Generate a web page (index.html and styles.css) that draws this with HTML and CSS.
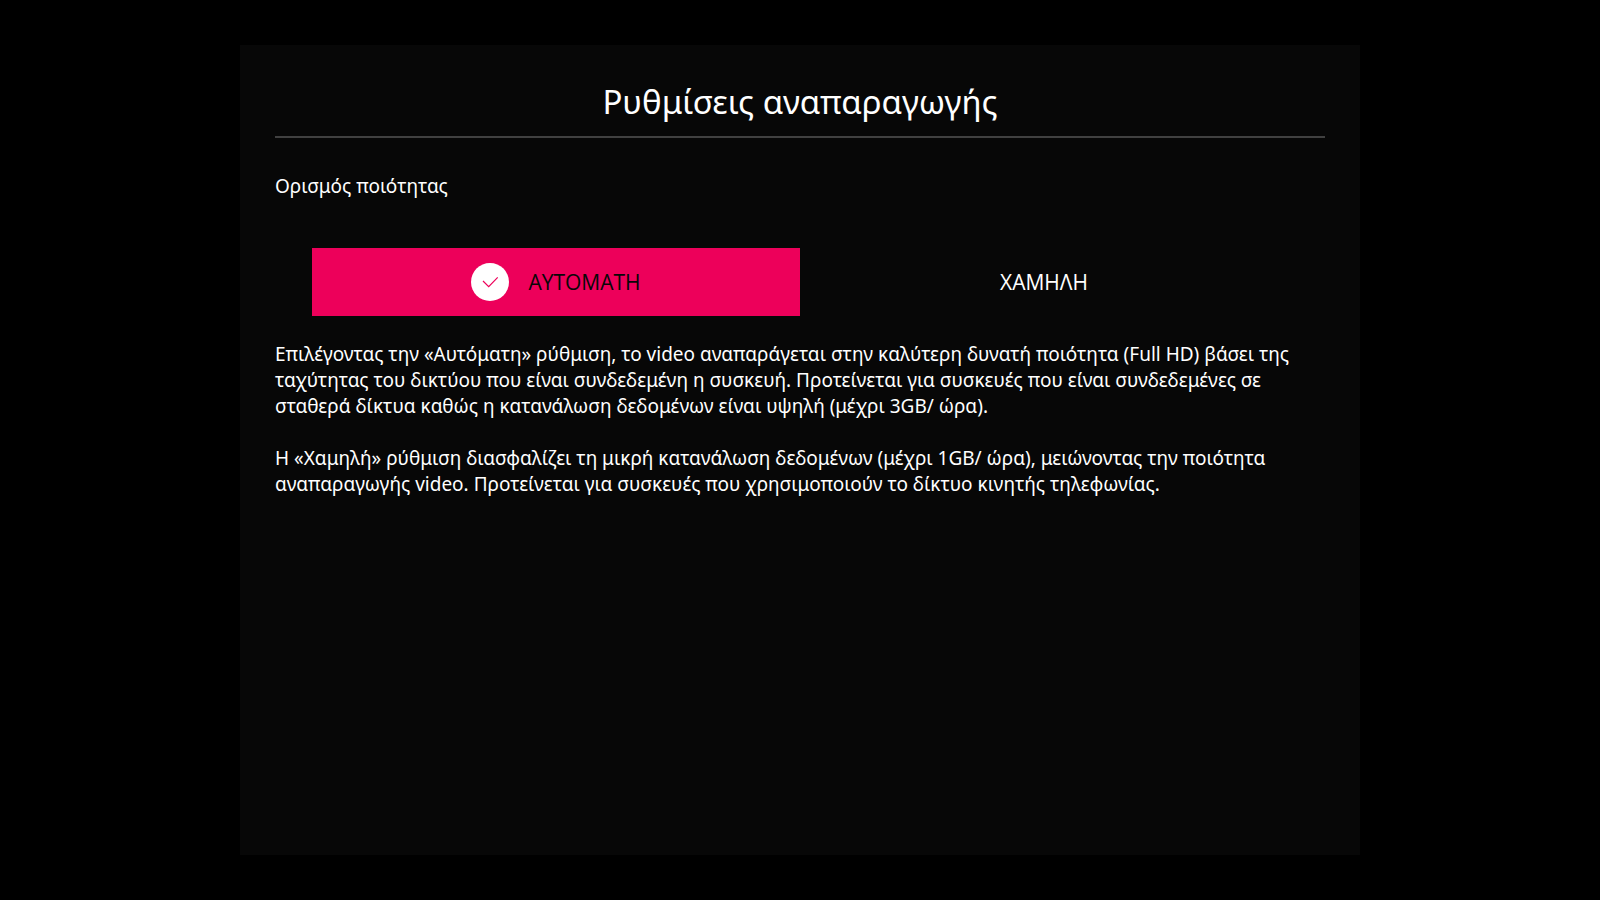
FILE: index.html
```html
<!DOCTYPE html>
<html lang="el">
<head>
<meta charset="utf-8">
<title>Ρυθμίσεις αναπαραγωγής</title>
<link rel="stylesheet" href="styles.css">
</head>
<body>
<main class="panel">
  <h1 class="title">Ρυθμίσεις αναπαραγωγής</h1>
  <h2 class="subtitle">Ορισμός ποιότητας</h2>
  <div class="options">
    <button class="option selected" type="button" aria-pressed="true">
      <svg class="check" viewBox="0 0 38 38" aria-hidden="true"><circle cx="19" cy="19" r="19" fill="#fff"/><path d="M12 18l5.700 5.600 9-9.300" fill="none" stroke="#ed005a" stroke-width="1.200"/></svg>
      <span>ΑΥΤΟΜΑΤΗ</span>
    </button>
    <button class="option" type="button" aria-pressed="false">ΧΑΜΗΛΗ</button>
  </div>
  <div class="description">
    <p>Επιλέγοντας την «Αυτόματη» ρύθμιση, το video αναπαράγεται στην καλύτερη δυνατή ποιότητα (Full HD) βάσει της ταχύτητας του δικτύου που είναι συνδεδεμένη η συσκευή. Προτείνεται για συσκευές που είναι συνδεδεμένες σε σταθερά δίκτυα καθώς η κατανάλωση δεδομένων είναι υψηλή (μέχρι 3GB/ ώρα).</p>
    <p>Η «Χαμηλή» ρύθμιση διασφαλίζει τη μικρή κατανάλωση δεδομένων (μέχρι 1GB/ ώρα), μειώνοντας την ποιότητα αναπαραγωγής video. Προτείνεται για συσκευές που χρησιμοποιούν το δίκτυο κινητής τηλεφωνίας.</p>
  </div>
</main>
</body>
</html>
```
FILE: styles.css
```css
* { box-sizing: border-box; }
body {
  margin: 0;
  min-height: 100vh;
  padding: 5vh 15%;
  display: flex;
  background: #000;
  color: #fff;
  font-family: "Noto Sans", "Open Sans", sans-serif;
}
.panel {
  flex: 1;
  padding: 34px 35px;
  background: #070707;
}
.title {
  margin: 0;
  padding-bottom: 11px;
  border-bottom: 2px solid #404040;
  font-size: 33px;
  line-height: 46px;
  font-weight: 400;
  text-align: center;
}
.subtitle {
  margin: 35px 0 0;
  font-size: 19px;
  line-height: 26px;
  font-weight: 400;
}
.options {
  display: flex;
  margin: 49px 37px 0;
}
.option {
  flex: 1;
  height: 68px;
  display: flex;
  align-items: center;
  justify-content: center;
  gap: 19px;
  padding: 0;
  border: 0;
  background: transparent;
  color: #fff;
  font-family: "Open Sans", "Noto Sans", sans-serif;
  font-size: 21px;
}
.selected {
  background: #ed005a;
  color: #070707;
}
.check {
  width: 38px;
  height: 38px;
}
.description {
  margin-top: 25px;
  font-size: 19px;
  line-height: 26px;
}
.description p { margin: 0 0 26px; }
```
